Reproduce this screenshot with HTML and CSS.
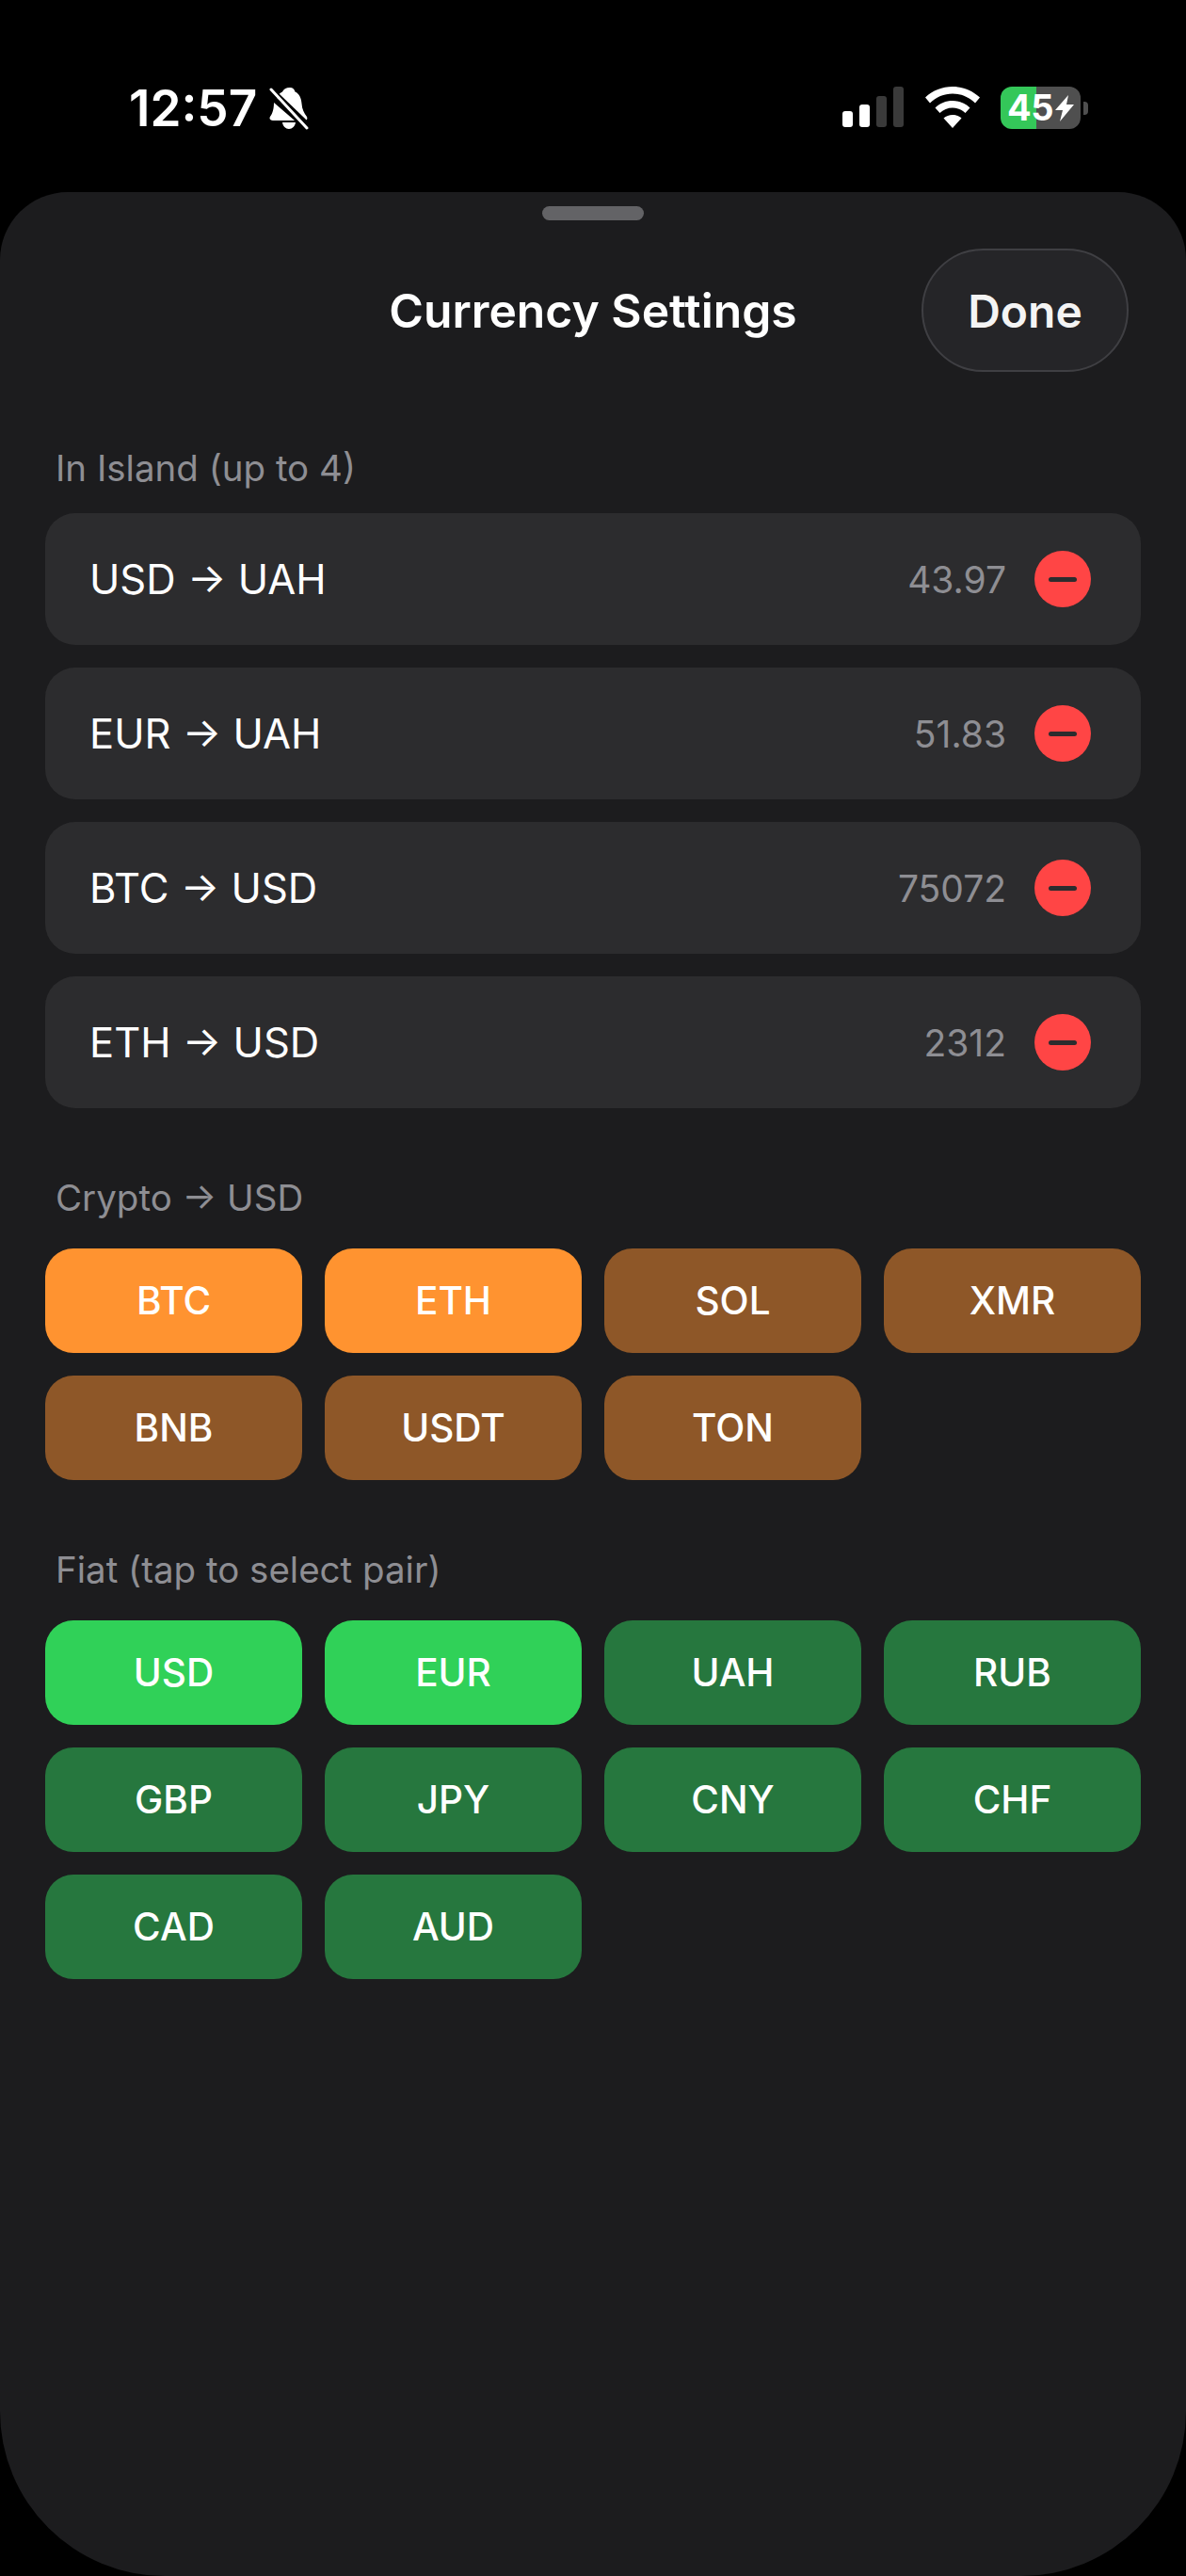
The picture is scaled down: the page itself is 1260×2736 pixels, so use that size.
FILE: index.html

```html
<!DOCTYPE html>
<html>
<head>
    <title>Currency Settings</title>
    <link rel="stylesheet" href="styles.css">
</head>
<body>
    <div class="status">
        <div class="status-left">
            <span class="time">12:57</span>
            <svg class="bell" viewBox="0 0 42 46">
                <path fill="#fff" d="M22 1c3 0 5 2 5.500 4.500C32 7.500 34 12 34.500 18c.4 6 2.500 10 5.500 14 1 2 0 4-2 4L8 12c1-3 3-5 6-6.500C15 3 18 1 22 1zM5 17l22 19H4c-2 0-3.500-1-3.500-2.500 0-1.500 1.500-3 2.500-5C4.500 25 5 21 5 17zM14 38h14c-.5 4-3.500 7-7 7s-6.500-3-7-7z"/>
                <path stroke="#000" stroke-width="5" d="M-2 -1L44 43"/>
                <path stroke="#fff" stroke-width="3" stroke-linecap="round" d="M2 3L40 44"/>
            </svg>
        </div>
        <div class="status-right">
            <div class="signal">
                <span class="bar bar1"></span>
                <span class="bar bar2"></span>
                <span class="bar bar3"></span>
                <span class="bar bar4"></span>
            </div>
            <svg class="wifi" viewBox="0 0 58 44">
                <path fill="#fff" d="M29 0c11 0 21 4 29 11.500l-5 6C46.500 11 38 7.500 29 7.500S11.500 11 5 17.500l-5-6C8 4 18 0 29 0z"/>
                <path fill="#fff" d="M29 15c7 0 13.500 2.500 18.500 7.500l-5 5.500C39 24.500 34 22.500 29 22.500S19 24.500 15.500 28l-5-5.500C15.500 17.500 22 15 29 15z"/>
                <path fill="#fff" d="M29 30c3.500 0 7 1.500 9.500 3.500L29 44l-9.500-10.500C22 31.500 25.500 30 29 30z"/>
            </svg>
            <div class="battery">
                <div class="battery-body">
                    <span class="battery-num">45</span>
                    <svg class="bolt" viewBox="0 0 20 28">
                        <path fill="#fff" d="M14 0L0 16h8L5 28 20 10h-8z"/>
                    </svg>
                </div>
                <span class="battery-nub"></span>
            </div>
        </div>
    </div>

    <div class="sheet">
        <div class="grabber"></div>
        <div class="header">
            <h1 class="title">Currency Settings</h1>
            <button class="done">Done</button>
        </div>

        <div class="label label-first">In Island (up to 4)</div>
        <div class="rows">
            <div class="row">
                <span class="pair">USD → UAH</span>
                <span class="rate">43.97</span>
                <span class="remove"><span class="dash"></span></span>
            </div>
            <div class="row">
                <span class="pair">EUR → UAH</span>
                <span class="rate">51.83</span>
                <span class="remove"><span class="dash"></span></span>
            </div>
            <div class="row">
                <span class="pair">BTC → USD</span>
                <span class="rate">75072</span>
                <span class="remove"><span class="dash"></span></span>
            </div>
            <div class="row">
                <span class="pair">ETH → USD</span>
                <span class="rate">2312</span>
                <span class="remove"><span class="dash"></span></span>
            </div>
        </div>

        <div class="label label-next">Crypto → USD</div>
        <div class="chips">
            <div class="chip orange">BTC</div>
            <div class="chip orange">ETH</div>
            <div class="chip orange-dim">SOL</div>
            <div class="chip orange-dim">XMR</div>
            <div class="chip orange-dim">BNB</div>
            <div class="chip orange-dim">USDT</div>
            <div class="chip orange-dim">TON</div>
        </div>

        <div class="label label-next">Fiat (tap to select pair)</div>
        <div class="chips">
            <div class="chip green">USD</div>
            <div class="chip green">EUR</div>
            <div class="chip green-dim">UAH</div>
            <div class="chip green-dim">RUB</div>
            <div class="chip green-dim">GBP</div>
            <div class="chip green-dim">JPY</div>
            <div class="chip green-dim">CNY</div>
            <div class="chip green-dim">CHF</div>
            <div class="chip green-dim">CAD</div>
            <div class="chip green-dim">AUD</div>
        </div>
    </div>
</body>
</html>
```

FILE: styles.css

```css
* {box-sizing: border-box;}

html, body {height: 100%;}

body {margin: 0;
      background-color: #000;
      color: #fff;
      font-family: Inter, "Liberation Sans", sans-serif;
      display: flex;
      flex-direction: column;}

/* status bar */
.status {height: 204px;
         flex: none;
         display: flex;
         justify-content: space-between;
         padding: 92px 104px 0 137px;}

.status-left {display: flex;
              align-items: flex-start;
              gap: 13px;}

.time {font-size: 53px;
       font-weight: 600;
       line-height: 46px;}

.bell {width: 42px;
       height: 46px;}

.status-right {display: flex;
               align-items: flex-start;}

.signal {display: flex;
          align-items: flex-end;
          gap: 7px;
          height: 43px;
          margin-right: 23px;}

.bar {width: 11px;
      border-radius: 3px;
      background-color: #3a3a3a;}

.bar1 {height: 17px; background-color: #fff;}
.bar2 {height: 24px; background-color: #fff;}
.bar3 {height: 33px;}
.bar4 {height: 43px;}

.wifi {width: 58px;
       height: 44px;
       margin-right: 22px;}

.battery {display: flex;
          align-items: center;}

.battery-body {width: 85px;
               height: 45px;
               border-radius: 12px;
               background: linear-gradient(to right, #34c759 38px, #4f4f4f 38px);
               display: flex;
               align-items: center;
               padding-left: 7px;}

.battery-num {font-size: 38px;
              font-weight: 700;
              letter-spacing: -0.5px;
              line-height: 45px;}

.bolt {width: 20px;
       height: 28px;
       margin-left: 2px;}

.battery-nub {width: 5px;
              height: 14px;
              margin-left: 3px;
              border-radius: 0 4px 4px 0;
              background-color: #4f4f4f;}

/* sheet */
.sheet {flex: 1;
        background-color: #1c1c1e;
        border-radius: 72px 72px 175px 175px;
        padding: 15px 48px 0;}

.grabber {width: 108px;
          height: 15px;
          margin: 0 auto;
          border-radius: 8px;
          background-color: #636366;}

.header {height: 131px;
         margin-top: 30px;
         display: flex;
         align-items: center;
         justify-content: center;
         position: relative;}

.title {margin: 0;
        font-size: 49.8px;
        font-weight: 600;}

.done {position: absolute;
       right: 13px;
       top: 0;
       width: 220px;
       height: 131px;
       padding-top: 3px;
       border-radius: 66px;
       border: 2px solid #3f3f43;
       background-color: #252528;
       color: #f4f4f4;
       font-family: inherit;
       font-size: 48px;
       font-weight: 600;}

.label {padding-left: 11px;
        font-size: 38.5px;
        line-height: 44px;
        color: #8e8e93;}

.label-first {margin-top: 80px;}
.label-next {margin-top: 73px;}

.rows {margin-top: 26px;
       display: flex;
       flex-direction: column;
       gap: 24px;}

.row {height: 140px;
      padding: 0 53px 0 47px;
      border-radius: 32px;
      background-color: #2c2c2e;
      display: flex;
      align-items: center;}

.pair {flex: 1;
       font-size: 43.5px;}

.rate {font-size: 39px;
       color: #8e8e93;}

.remove {width: 60px;
         height: 60px;
         margin-left: 30px;
         border-radius: 50%;
         background-color: #ff4545;
         display: flex;
         align-items: center;
         justify-content: center;}

.dash {width: 30px;
       height: 5px;
       border-radius: 3px;
       background-color: #2c2c2e;}

.chips {margin-top: 32px;
        display: grid;
        grid-template-columns: repeat(4, 1fr);
        gap: 24px;}

.chip {height: 111px;
       border-radius: 30px;
       display: flex;
       align-items: center;
       justify-content: center;
       font-size: 40.5px;
       font-weight: 500;}

.orange {background-color: #ff9330;}
.orange-dim {background-color: #8e5728;}
.green {background-color: #30d158;}
.green-dim {background-color: #26773e;}
```
